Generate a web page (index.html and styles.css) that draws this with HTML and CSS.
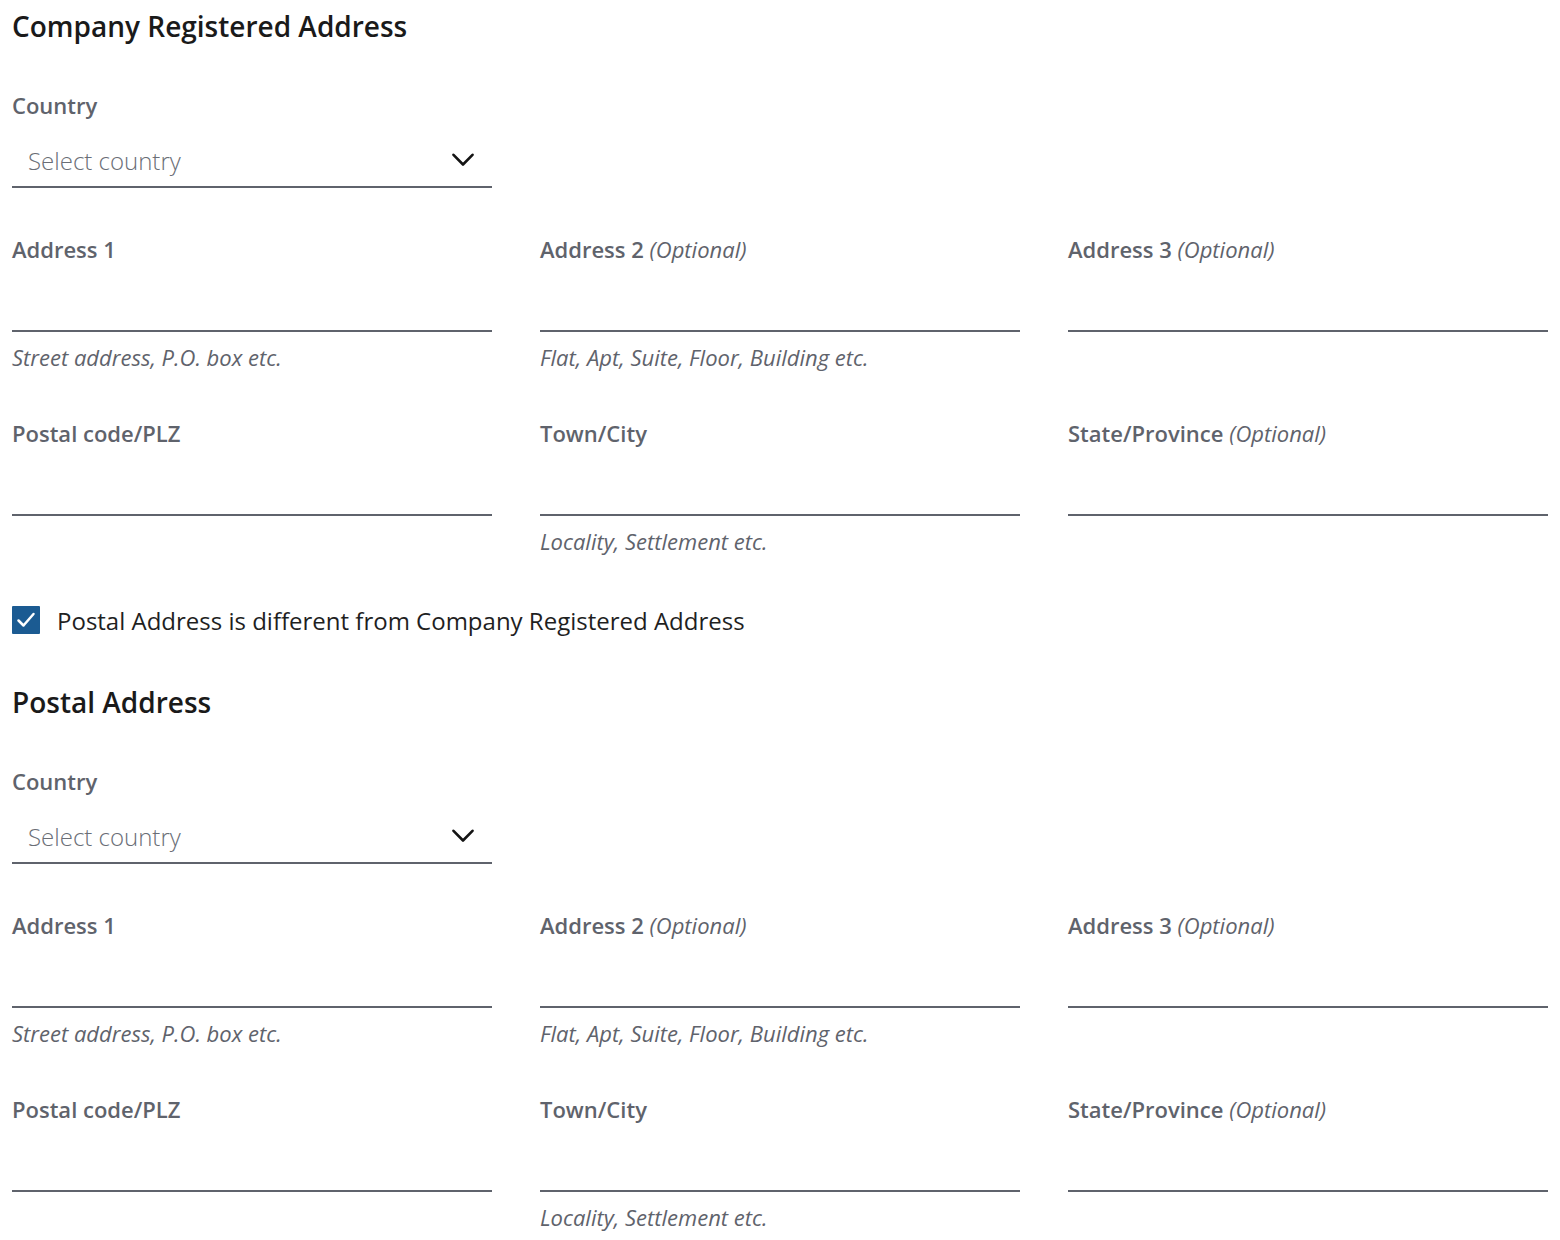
FILE: index.html
```html
<!DOCTYPE html>
<html lang="en">
<head>
<meta charset="utf-8">
<title>Company Address</title>
<link rel="stylesheet" href="styles.css">
</head>
<body>
<main class="page">
  <section class="address">
    <h2 class="section-title">Company Registered Address</h2>
    <div class="grid">
      <div class="field">
        <label class="label">Country</label>
        <div class="select">
          <span class="select-placeholder">Select country</span>
          <svg class="chevron" width="22" height="14" viewBox="0 0 22 14" aria-hidden="true"><path d="M1.5 1.8 L11 11.5 L20.5 1.8" fill="none" stroke="#141414" stroke-width="2.6" stroke-linecap="round" stroke-linejoin="round"/></svg>
        </div>
      </div>
    </div>
    <div class="grid">
      <div class="field">
        <label class="label">Address 1</label>
        <div class="input"></div>
        <p class="hint">Street address, P.O. box etc.</p>
      </div>
      <div class="field">
        <label class="label">Address 2 <em class="optional">(Optional)</em></label>
        <div class="input"></div>
        <p class="hint">Flat, Apt, Suite, Floor, Building etc.</p>
      </div>
      <div class="field">
        <label class="label">Address 3 <em class="optional">(Optional)</em></label>
        <div class="input"></div>
      </div>
    </div>
    <div class="grid">
      <div class="field">
        <label class="label">Postal code/PLZ</label>
        <div class="input"></div>
      </div>
      <div class="field">
        <label class="label">Town/City</label>
        <div class="input"></div>
        <p class="hint">Locality, Settlement etc.</p>
      </div>
      <div class="field">
        <label class="label">State/Province <em class="optional">(Optional)</em></label>
        <div class="input"></div>
      </div>
    </div>
  </section>

  <div class="check-row">
    <span class="checkbox">
      <svg width="28" height="28" viewBox="0 0 28 28" aria-hidden="true"><path d="M6.5 14.5 L11.5 19.5 L21.5 8" fill="none" stroke="#ffffff" stroke-width="2.5" stroke-linecap="round" stroke-linejoin="round"/></svg>
    </span>
    <span class="check-label">Postal Address is different from Company Registered Address</span>
  </div>

  <section class="address">
    <h2 class="section-title">Postal Address</h2>
    <div class="grid">
      <div class="field">
        <label class="label">Country</label>
        <div class="select">
          <span class="select-placeholder">Select country</span>
          <svg class="chevron" width="22" height="14" viewBox="0 0 22 14" aria-hidden="true"><path d="M1.5 1.8 L11 11.5 L20.5 1.8" fill="none" stroke="#141414" stroke-width="2.6" stroke-linecap="round" stroke-linejoin="round"/></svg>
        </div>
      </div>
    </div>
    <div class="grid">
      <div class="field">
        <label class="label">Address 1</label>
        <div class="input"></div>
        <p class="hint">Street address, P.O. box etc.</p>
      </div>
      <div class="field">
        <label class="label">Address 2 <em class="optional">(Optional)</em></label>
        <div class="input"></div>
        <p class="hint">Flat, Apt, Suite, Floor, Building etc.</p>
      </div>
      <div class="field">
        <label class="label">Address 3 <em class="optional">(Optional)</em></label>
        <div class="input"></div>
      </div>
    </div>
    <div class="grid">
      <div class="field">
        <label class="label">Postal code/PLZ</label>
        <div class="input"></div>
      </div>
      <div class="field">
        <label class="label">Town/City</label>
        <div class="input"></div>
        <p class="hint">Locality, Settlement etc.</p>
      </div>
      <div class="field">
        <label class="label">State/Province <em class="optional">(Optional)</em></label>
        <div class="input"></div>
      </div>
    </div>
  </section>
</main>
</body>
</html>
```

FILE: styles.css
```css
* { box-sizing: border-box; }

html, body {
  margin: 0;
  padding: 0;
  background: #ffffff;
}

body {
  font-family: "Open Sans", "Noto Sans", sans-serif;
  color: #1f1f1f;
}

.page {
  padding: 0 12px;
  width: 1560px;
}

.section-title {
  margin: 0 0 40px;
  font-size: 28px;
  line-height: 52px;
  font-weight: 600;
  color: #1a1a1a;
}

.grid {
  display: grid;
  grid-template-columns: repeat(3, 480px);
  column-gap: 48px;
  margin-bottom: 48px;
}

.field {
  display: flex;
  flex-direction: column;
}

.label {
  display: block;
  font-size: 22px;
  line-height: 26px;
  font-weight: 600;
  color: #5f636c;
}

.optional {
  font-style: italic;
  font-weight: 400;
}

.input,
.select {
  margin-top: 12px;
  height: 58px;
  border-bottom: 2px solid #5f636c;
}

.select {
  display: flex;
  align-items: center;
  justify-content: space-between;
  padding: 4px 18px 0 16px;
}

.select-placeholder {
  font-size: 24px;
  font-weight: 300;
  color: #6a6e76;
}

.chevron {
  margin-top: 0;
}

.hint {
  margin: 12px 0 0;
  padding-bottom: 2px;
  font-size: 22px;
  line-height: 26px;
  font-style: italic;
  color: #5f636c;
}

.check-row {
  display: flex;
  align-items: center;
  gap: 17px;
  height: 32px;
  margin-bottom: 40px;
}

.checkbox {
  width: 28px;
  height: 28px;
  background: #1b5b92;
  border-radius: 1px;
  display: flex;
}

.check-label {
  font-size: 24px;
  color: #1f1f1f;
}
```
